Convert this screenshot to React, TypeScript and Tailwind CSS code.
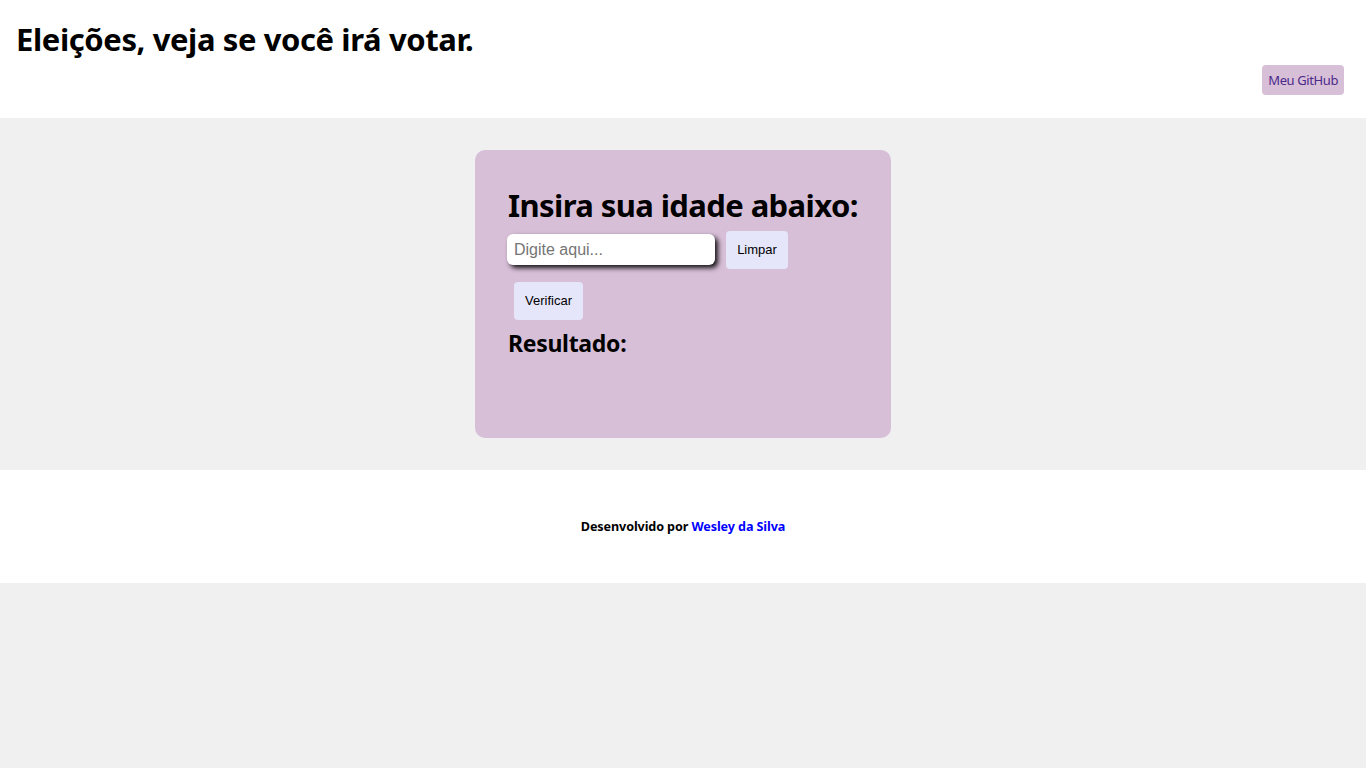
export default function App() {
  return (
    <div className="min-h-screen bg-[#f0f0f0] font-['Noto_Sans',sans-serif] text-black">
      {/* Topo */}
      <header className="h-[118px] bg-white px-4 flex flex-col">
        <h1 className="pt-[18px] text-[31px] font-bold leading-[42px] tracking-[-0.4px]">
          Eleições, veja se você irá votar.
        </h1>
        <div className="flex justify-end pr-[6px] mt-[5px]">
          <a className="h-[30px] px-[6px] pt-[2px] flex items-center rounded-[4px] bg-[#d8bfd8] text-[13px] text-[#4b2a8a] tracking-[-0.4px]">
            Meu GitHub
          </a>
        </div>
      </header>

      {/* Cartão */}
      <main className="py-8 flex justify-center">
        <section className="w-[416px] h-[288px] rounded-[10px] bg-[#d8bfd8] pt-[30px] px-[32px]">
          <h2 className="whitespace-nowrap pl-[1px] text-[31px] font-bold leading-[50px] tracking-[-0.6px]">
            Insira sua idade abaixo:
          </h2>
          <div className="flex items-start mt-[1px]">
            <input
              type="text"
              placeholder="Digite aqui..."
              className="mt-[3px] w-[208px] h-[31px] rounded-[6px] bg-white px-[7px] text-[16px] font-['Liberation_Sans',sans-serif] shadow-[3px_3px_5px_rgba(0,0,0,0.9)] outline-none placeholder:text-[#757575]"
            />
            <button className="ml-[11px] w-[62px] h-[38px] rounded-[4px] bg-[#e6e6fa] text-[13px] font-['Liberation_Sans',sans-serif]">
              Limpar
            </button>
          </div>
          <button className="mt-[13px] ml-[7px] w-[69px] h-[38px] rounded-[4px] bg-[#e6e6fa] text-[13px] font-['Liberation_Sans',sans-serif]">
            Verificar
          </button>
          <h3 className="mt-[6px] pl-[1px] text-[23px] font-bold leading-[34px] tracking-[-0.3px]">Resultado:</h3>
        </section>
      </main>

      {/* Rodapé */}
      <footer className="h-[113px] bg-white flex items-center justify-center pt-[2px]">
        <p className="text-[12.6px] font-bold tracking-[-0.1px]">
          Desenvolvido por <a className="text-[#0000ff]">Wesley da Silva</a>
        </p>
      </footer>
    </div>
  );
}
